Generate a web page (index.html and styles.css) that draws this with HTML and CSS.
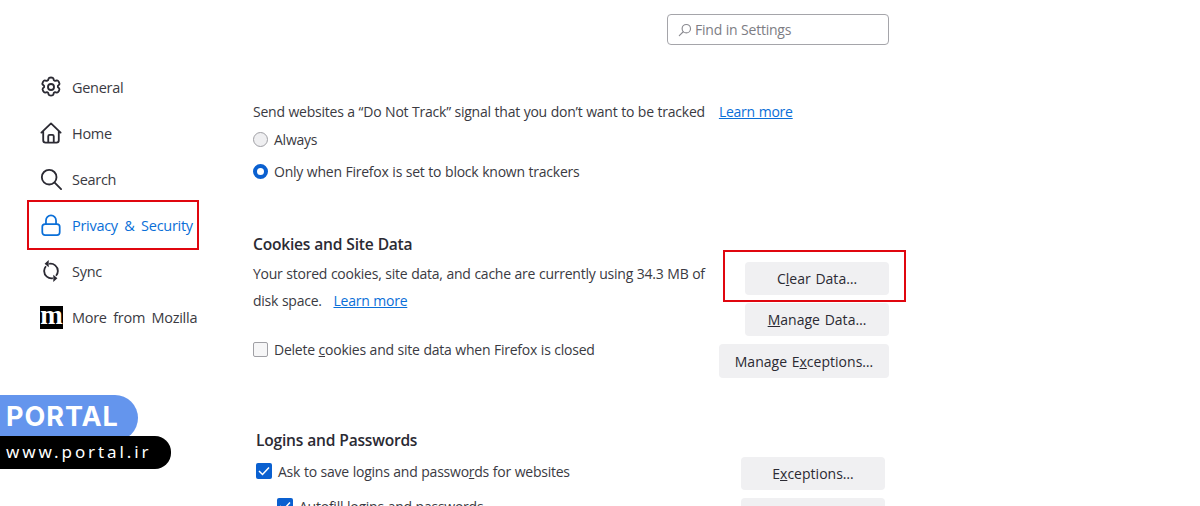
FILE: index.html
```html
<!DOCTYPE html>
<html lang="en">
<head>
<meta charset="utf-8">
<title>Settings</title>
<link rel="stylesheet" href="styles.css">
</head>
<body>
<div class="page">
  <nav class="sidebar">
    <a class="nav-item"><svg class="nav-icon" viewBox="0 0 24 24" fill="none" stroke="#2b2a33" stroke-width="2" stroke-linejoin="round"><path d="M9.400 2.800C9.800 1.300 14.200 1.300 14.600 2.800l.5 1.900 1.300.7 1.900-.5c1.500-.4 3.700 3.400 2.600 4.500l-1.400 1.400v1.400l1.400 1.400c1.100 1.100-1.100 4.900-2.600 4.500l-1.900-.5-1.300.7-.5 1.900c-.4 1.500-4.800 1.500-5.200 0l-.5-1.900-1.300-.7-1.900.5c-1.500.4-3.700-3.400-2.600-4.500l1.400-1.400v-1.400L2.900 9.300C1.800 8.200 4 4.400 5.500 4.900l1.900.5 1.300-.7z"/><circle cx="12" cy="12" r="3.300"/></svg><span>General</span></a>
    <a class="nav-item"><svg class="nav-icon" viewBox="0 0 24 24" fill="none" stroke="#2b2a33" stroke-width="2" stroke-linejoin="round" stroke-linecap="round"><path d="M1.500 11.500 12 1.500l10.500 10M3.500 10v10a2.500 2.500 0 0 0 2.500 2.500h12a2.500 2.500 0 0 0 2.500-2.500V10M9 22.500V15.500a1.500 1.500 0 0 1 1.500-1.500h3a1.500 1.500 0 0 1 1.500 1.500v7"/></svg><span>Home</span></a>
    <a class="nav-item"><svg class="nav-icon" viewBox="0 0 24 24" fill="none" stroke="#2b2a33" stroke-width="2" stroke-linecap="round"><circle cx="10" cy="10" r="8"/><path d="m16 16 7 7"/></svg><span>Search</span></a>
    <a class="nav-item is-active"><svg class="nav-icon" viewBox="0 0 24 24" fill="none" stroke="#0a6fd8" stroke-width="1.900" stroke-linejoin="round"><path d="M6.500 11V7a5.500 5.500 0 0 1 11 0v4"/><rect x="2.500" y="11" width="19" height="12" rx="3"/></svg><span>Privacy &amp; Security</span></a>
    <a class="nav-item"><svg class="nav-icon" viewBox="0 0 24 24" fill="none" stroke="#2b2a33" stroke-width="2"><path d="M10 4.200A8 8 0 0 1 19.500 12a8 8 0 0 1-2 5.200M14 19.800A8 8 0 0 1 4.500 12a8 8 0 0 1 2-5.200"/><path d="M9.500 0 9.500 8 5 4zM14.500 24 14.500 16 19 20z" fill="#2b2a33" stroke="none"/></svg><span>Sync</span></a>
    <a class="nav-item"><span class="moz-logo">m</span><span>More from Mozilla</span></a>
  </nav>

  <main class="content">
    <div class="search-row">
      <div class="search-box">
        <svg class="search-icon" viewBox="0 0 16 16" fill="none" stroke="#8a8a90" stroke-width="1.300" stroke-linecap="round"><circle cx="9.500" cy="6.500" r="4.800"/><path d="M6 10 1.500 14.500"/></svg>
        <span>Find in Settings</span>
      </div>
    </div>

    <section class="dnt">
      <p class="line"><span>Send websites a “Do Not Track” signal that you don’t want to be tracked</span> <a class="link">Learn more</a></p>
      <div class="option"><span class="radio"></span><span>Always</span></div>
      <div class="option second"><span class="radio is-on"></span><span>Only when Firefox is set to block known trackers</span></div>
    </section>

    <section class="cookies">
      <h2 class="heading">Cookies and Site Data</h2>
      <div class="split">
        <div class="split-text">
          <p class="para">Your stored cookies, site data, and cache are currently using 34.3 MB of disk space. <a class="link para-link">Learn more</a></p>
          <div class="option del"><span class="check"></span><span>Delete <u>c</u>ookies and site data when Firefox is closed</span></div>
        </div>
        <div class="btn-col">
          <button class="btn wide is-marked">C<u>l</u>ear Data…</button>
          <button class="btn wide"><u>M</u>anage Data…</button>
          <button class="btn exc">Manage E<u>x</u>ceptions…</button>
        </div>
      </div>
    </section>

    <section class="logins">
      <h2 class="heading">Logins and Passwords</h2>
      <div class="split">
        <div class="split-text">
          <div class="option"><span class="check is-on"><svg viewBox="0 0 16 16" fill="none" stroke="#fff" stroke-width="1.500"><path d="m3 8 3.500 3.500L13 4.500"/></svg></span><span>Ask to save logins and passwo<u>r</u>ds for websites</span></div>
          <div class="option sub"><span class="check is-on"><svg viewBox="0 0 16 16" fill="none" stroke="#fff" stroke-width="1.500"><path d="m3 8 3.500 3.500L13 4.500"/></svg></span><span>Autofill logins and passwords</span></div>
        </div>
        <div class="btn-col login-btns">
          <button class="btn wide">E<u>x</u>ceptions…</button>
          <button class="btn wide">Saved Logins…</button>
        </div>
      </div>
    </section>
  </main>
</div>

<div class="badge">
  <div class="badge-top">PORTAL</div>
  <div class="badge-bottom">www.portal.ir</div>
</div>
</body>
</html>
```

FILE: styles.css
```css
*, *::after { box-sizing: border-box; }
html, body {
  margin: 0;
  height: 506px;
  overflow: hidden;
  background: #fff;
}
body {
  font-family: "Open Sans", "Noto Sans", sans-serif;
  font-size: 14px;
  color: #3a3a42;
  letter-spacing: -0.24px;
  word-spacing: 0.35px;
}
.page { display: flex; height: 506px; }

.sidebar {
  width: 253px;
  flex: none;
  padding: 64px 0 0 40px;
  display: flex;
  flex-direction: column;
}
.nav-item {
  position: relative;
  height: 46px;
  display: flex;
  align-items: center;
  gap: 10px;
  font-size: 14.500px;
  letter-spacing: -0.28px;
  word-spacing: 3px;
}
.nav-icon { width: 22px; height: 22px; flex: none; }
.is-active { color: #0a6fd8; }
.is-active::after {
  content: "";
  position: absolute;
  left: -13px;
  top: -2px;
  width: 172px;
  height: 50px;
  border: 2px solid #e0060f;
}
.moz-logo {
  width: 23px;
  height: 23px;
  margin-right: -1px;
  flex: none;
  background: #000;
  color: #fff;
  font-family: "Liberation Serif", serif;
  font-weight: 700;
  font-size: 27px;
  line-height: 18px;
  letter-spacing: 0;
  text-align: center;
  overflow: hidden;
}

.content { width: 636px; flex: none; }
.search-row { display: flex; justify-content: flex-end; padding-top: 14px; }
.search-box {
  width: 222px;
  height: 31px;
  border: 1px solid #a5a5aa;
  border-radius: 4px;
  display: flex;
  align-items: center;
  gap: 3px;
  padding-left: 10px;
  color: #7d7d84;
}
.search-icon { width: 14px; height: 14px; flex: none; }

.line, .para { margin: 0; }
.dnt { padding-top: 57px; }
.line { height: 20px; line-height: 20px; display: flex; gap: 14px; white-space: nowrap; }
.link { color: #0a6fd8; text-decoration: underline; }
.option { display: flex; align-items: center; gap: 6px; height: 20px; white-space: nowrap; }
.dnt .option { margin-top: 7px; }
.dnt .second { margin-top: 12px; }
.radio {
  width: 15px;
  height: 15px;
  flex: none;
  border-radius: 50%;
  border: 1px solid #a0a0a5;
  background: #efeff1;
}
.radio.is-on { border: 4px solid #0a60d0; background: #fff; }
.check {
  width: 15px;
  height: 15px;
  flex: none;
  border: 1px solid #a0a0a5;
  border-radius: 2px;
  background: #f6f6f7;
}
.check.is-on { width: 16px; height: 16px; border: 0; background: #0a60d0; display: block; }
.check svg { display: block; width: 16px; height: 16px; }

.cookies { padding-top: 52px; }
.heading {
  margin: 0;
  font-size: 15.600px;
  font-weight: 600;
  line-height: 22px;
  color: #2b2a33;
}
.split { display: flex; justify-content: space-between; align-items: flex-start; }
.split-text { width: 460px; }
.para { line-height: 27px; margin-top: 5px; width: 455px; }
.para-link { margin-left: 8px; }
.del { margin-top: 25px; }
.btn-col {
  display: flex;
  flex-direction: column;
  align-items: flex-end;
  gap: 8px;
  margin-top: 7px;
}
.btn {
  position: relative;
  height: 33px;
  flex: none;
  border: 0;
  border-radius: 4px;
  background: #f0f0f2;
  font: inherit;
  letter-spacing: 0.02px;
  word-spacing: 1px;
  color: #2b2a33;
  padding: 0;
  white-space: nowrap;
}
.wide { width: 144px; }
.exc { width: 170px; height: 34px; }
.is-marked::after {
  content: "";
  position: absolute;
  left: -22px;
  top: -12px;
  width: 183px;
  height: 52px;
  border: 2px solid #e0060f;
}

.logins { padding: 51px 4px 0 3px; }
.logins .option { margin-top: 10px; }
.logins .sub { margin: 15px 0 0 21px; }
.login-btns { margin-top: 6px; }

.badge {
  position: absolute;
  left: 0;
  top: 395px;
  width: 171px;
}
.badge-top {
  width: 138px;
  height: 46px;
  background: #6495ed;
  border-radius: 0 23px 23px 0;
  color: #fff;
  font-family: "Inter", "Noto Sans", sans-serif;
  font-weight: 700;
  font-size: 27px;
  letter-spacing: 0.95px;
  line-height: 44px;
  padding-left: 6px;
}
.badge-bottom {
  position: absolute;
  top: 41px;
  left: 0;
  width: 171px;
  height: 33px;
  background: #000;
  border-radius: 0 16px 16px 0;
  color: #fff;
  font-family: "Noto Sans", sans-serif;
  font-size: 17px;
  letter-spacing: 2.900px;
  line-height: 32px;
  padding-left: 6px;
  white-space: nowrap;
}
```
